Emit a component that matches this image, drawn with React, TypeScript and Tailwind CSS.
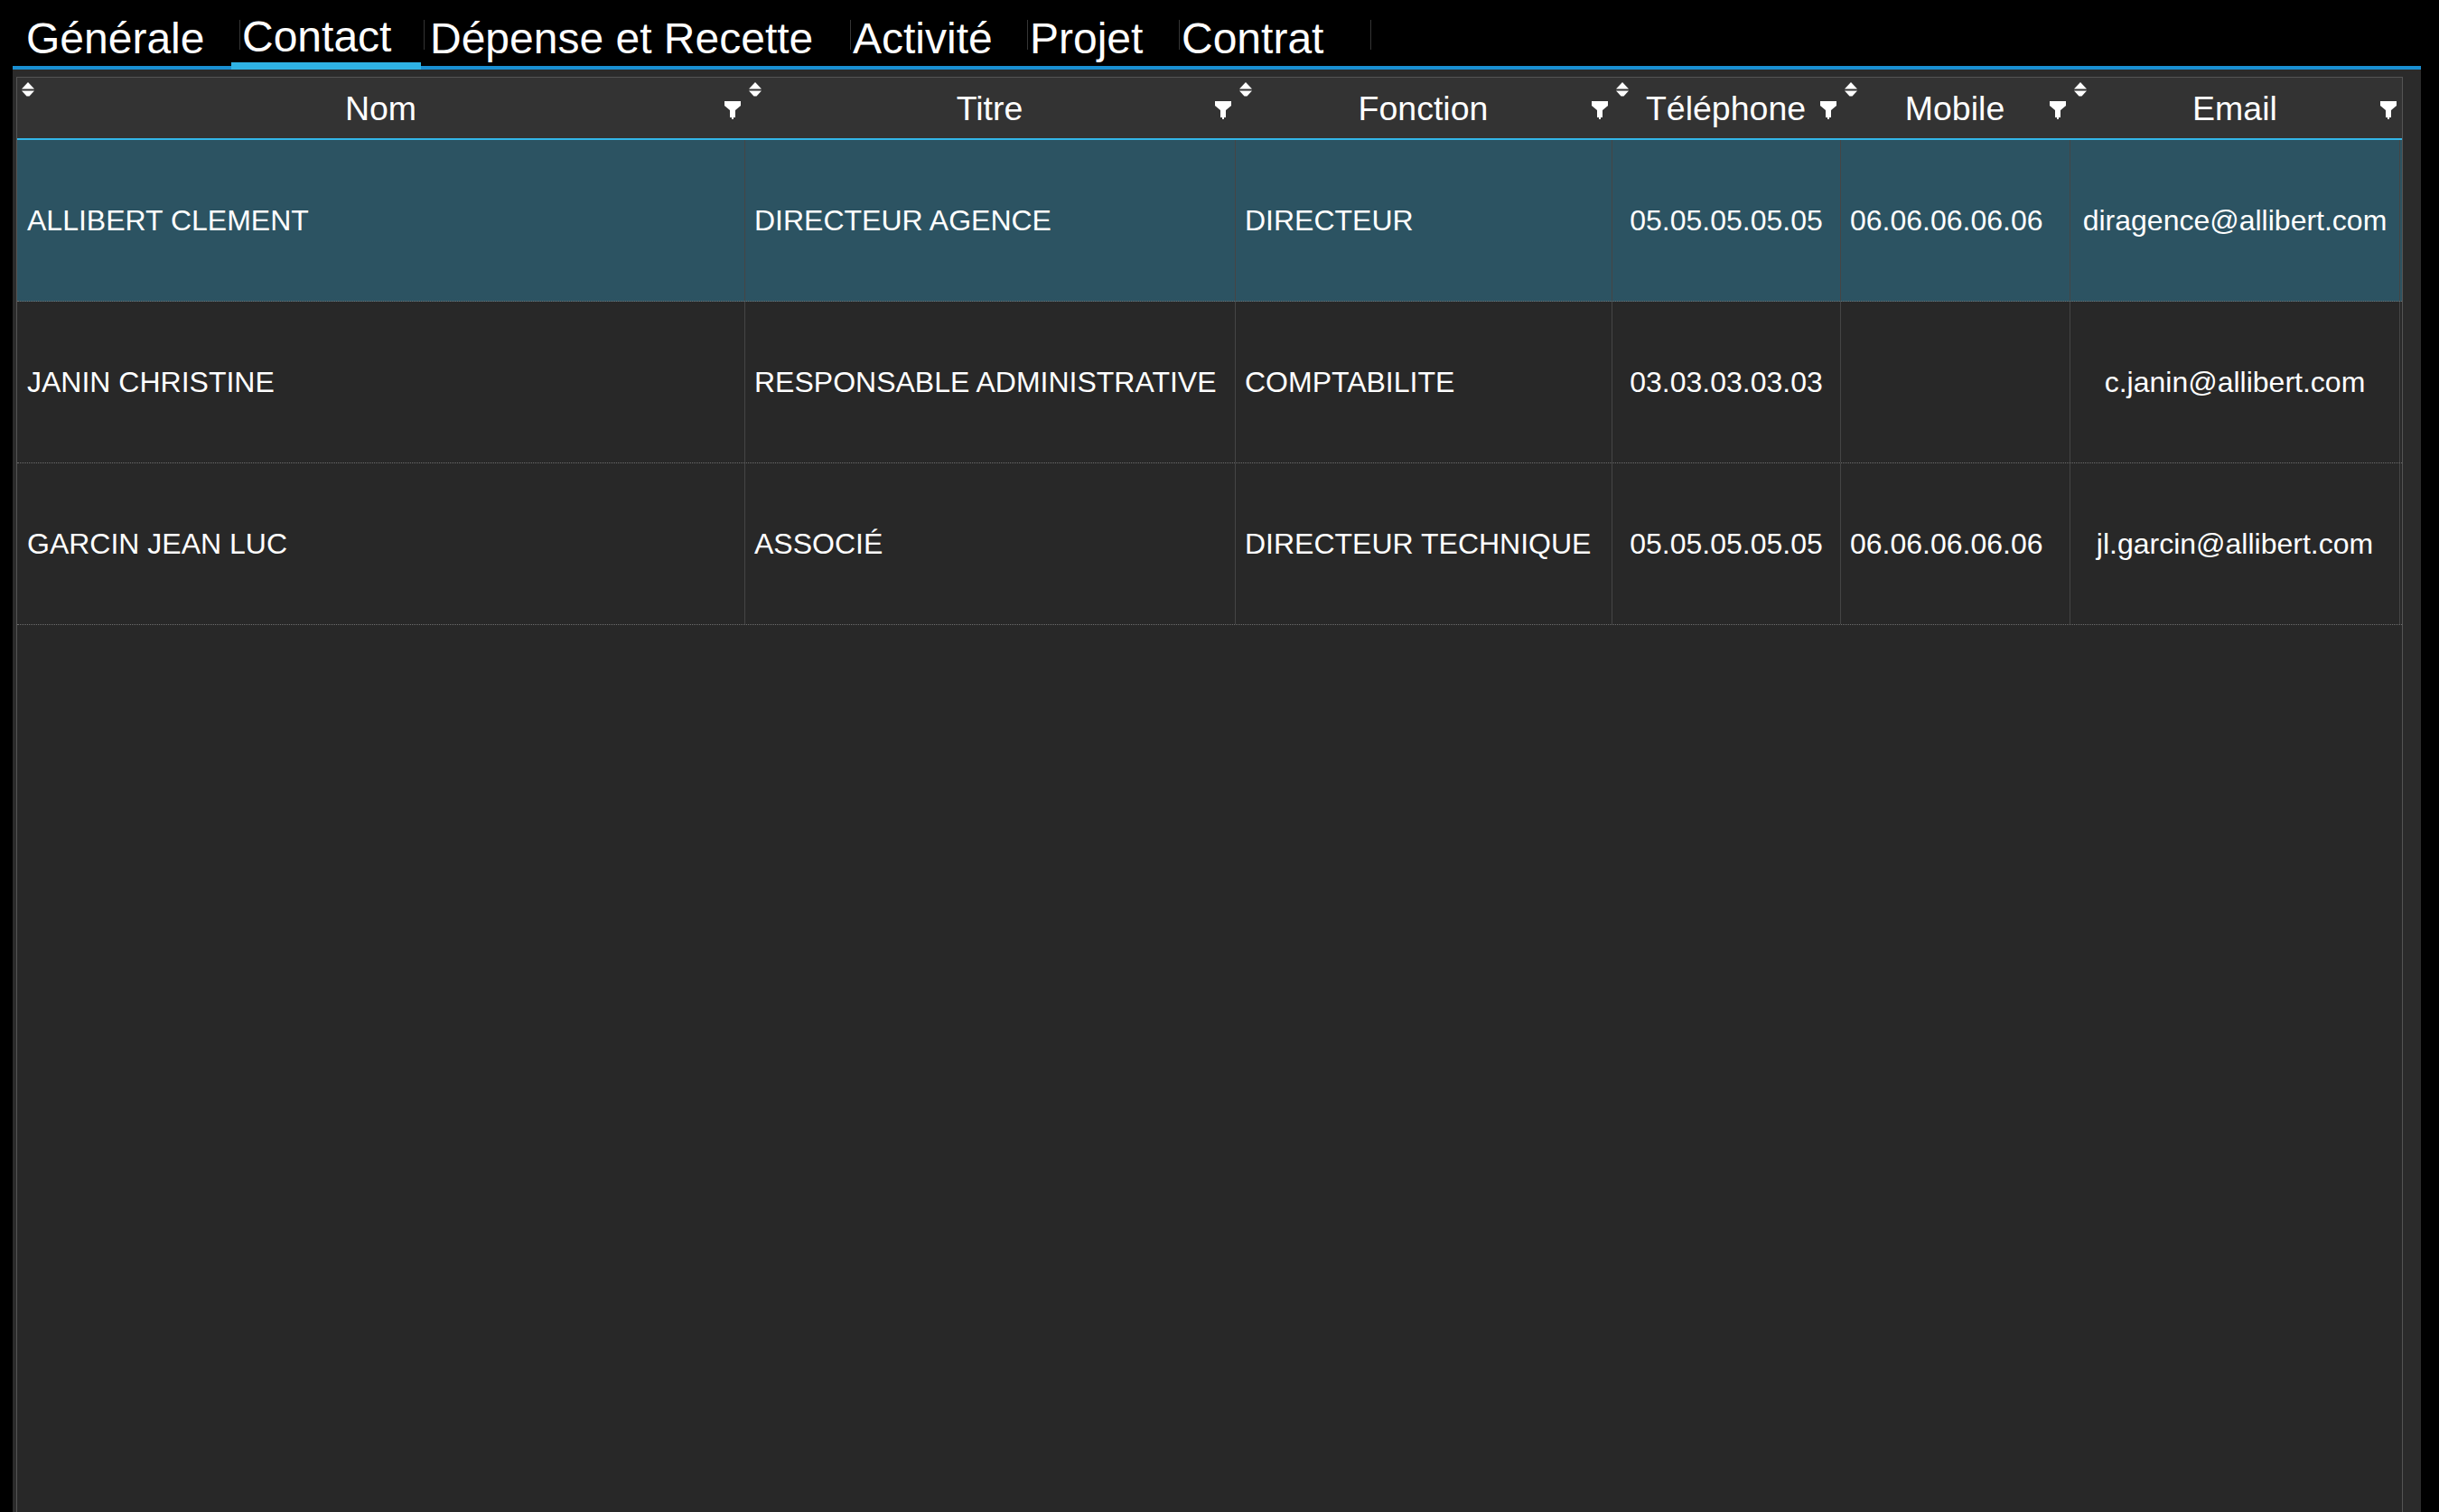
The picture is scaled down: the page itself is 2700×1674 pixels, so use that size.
import React from 'react';

// Onglets de la fiche
const tabs = [
    { label: 'Générale', width: 'w-[236px]', first: true },
    { label: 'Contact', width: 'w-[204px]', active: true },
    { label: 'Dépense et Recette', width: 'w-[472px]', pad: 'ml-[6px]' },
    { label: 'Activité', width: 'w-[196px]' },
    { label: 'Projet', width: 'w-[168px]' },
    { label: 'Contrat', width: 'w-[212px]' },
];

const columns = [
    { label: 'Nom', align: 'left' },
    { label: 'Titre', align: 'left' },
    { label: 'Fonction', align: 'left' },
    { label: 'Téléphone', align: 'center' },
    { label: 'Mobile', align: 'left' },
    { label: 'Email', align: 'center' },
];

const rows = [
    ['ALLIBERT CLEMENT', 'DIRECTEUR AGENCE', 'DIRECTEUR', '05.05.05.05.05', '06.06.06.06.06', 'diragence@allibert.com'],
    ['JANIN CHRISTINE', 'RESPONSABLE ADMINISTRATIVE', 'COMPTABILITE', '03.03.03.03.03', '', 'c.janin@allibert.com'],
    ['GARCIN JEAN LUC', 'ASSOCIÉ', 'DIRECTEUR TECHNIQUE', '05.05.05.05.05', '06.06.06.06.06', 'jl.garcin@allibert.com'],
];

function SortIcon() {
    return (
        <svg width="14" height="16" viewBox="0 0 14 16" className="absolute left-[5px] top-[5px]">
            <path d="M7 0 L14 7.5 L0 7.5 Z" fill="#fff" />
            <path d="M0 9.5 L14 9.5 L8.5 15.5 L5.5 15.5 Z" fill="#fff" />
        </svg>
    );
}

function FilterIcon() {
    return (
        <svg width="18" height="20" viewBox="0 0 18 20" className="absolute right-[4px] top-[26px]">
            <path d="M0 0 H18 V5 L12 10 V18 H10 V20 H8 V18 H6 V10 L0 5 Z" fill="#fff" />
        </svg>
    );
}

export default function App() {
    return (
        <div className="flex h-[1674px] w-[2700px] flex-col overflow-hidden bg-black text-white font-['Liberation_Sans',Arial,sans-serif]">
            {/* Barre d'onglets */}
            <div className="flex h-[73px] shrink-0 items-start pl-[29px]">
                {tabs.map((t) => (
                    <div key={t.label} className={`relative flex h-[73px] shrink-0 items-start ${t.width}`}>
                        {!t.first && <div className="mt-[22px] h-[33px] w-px bg-[#353535]" />}
                        <span
                            className={`whitespace-nowrap text-[48px] leading-none ${t.first ? '' : t.pad ?? 'ml-[2px]'} ${t.active ? 'mt-[17px]' : 'mt-[19px]'}`}
                        >
                            {t.label}
                        </span>
                        {t.active && <div className="absolute left-[-9px] top-[69px] z-10 h-[8px] w-[210px] bg-[#2fb2e4]" />}
                    </div>
                ))}
                <div className="mt-[22px] h-[33px] w-px bg-[#353535]" />
            </div>

            <div className="ml-[14px] mr-[20px] h-[4px] shrink-0 bg-[#1a8fd2]" />

            {/* Panneau */}
            <div className="ml-[14px] mr-[20px] flex flex-1 flex-col bg-[#2b2b2b] pl-[4px] pr-[20px] pt-[8px]">
                <div className="flex-1 border-l border-r border-t border-[#555] bg-[#282828]">
                    {/* En-tête */}
                    <div className="grid grid-cols-[805px_543px_417px_253px_254px_366px] border-b-2 border-[#33b6e8] bg-[#333333]">
                        {columns.map((c) => (
                            <div key={c.label} className="relative flex h-[67px] items-center justify-center pt-[2px]">
                                <SortIcon />
                                <span className="text-[37.5px] leading-none">{c.label}</span>
                                <FilterIcon />
                            </div>
                        ))}
                    </div>

                    {/* Lignes */}
                    {rows.map((r, i) => (
                        <div
                            key={i}
                            className={`grid h-[179px] grid-cols-[805px_543px_417px_253px_254px_366px] border-b border-dotted border-[#6e6e6e] ${i === 0 ? 'bg-[#2c5362]' : ''}`}
                        >
                            {r.map((v, j) => (
                                <div
                                    key={j}
                                    className={`flex items-center whitespace-nowrap text-[32px] leading-none ${j > 0 ? 'border-l border-[#454545]' : ''} ${j === 5 ? 'border-r border-[#454545]' : ''} ${columns[j].align === 'center' ? 'justify-center' : j === 0 ? 'pl-[11px]' : 'pl-[10px]'}`}
                                >
                                    {v}
                                </div>
                            ))}
                        </div>
                    ))}
                </div>
            </div>
        </div>
    );
}
